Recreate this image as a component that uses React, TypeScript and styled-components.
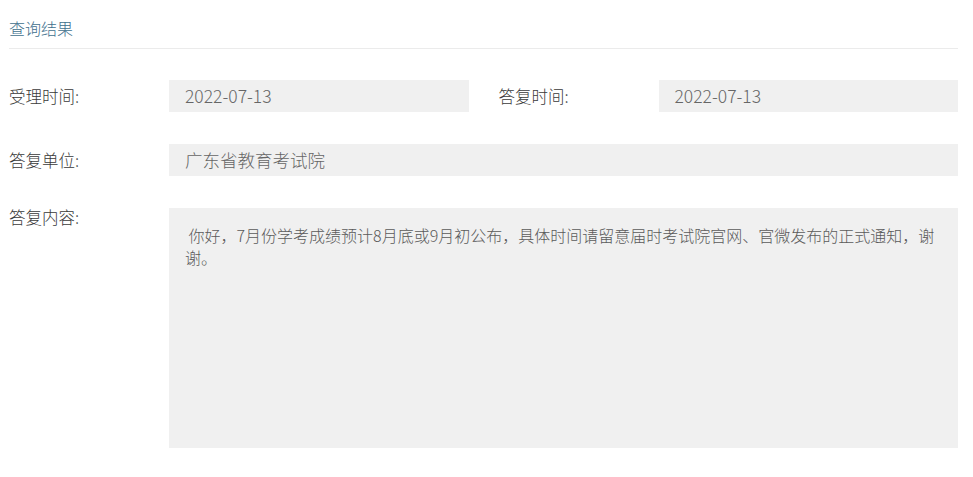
import styled, { createGlobalStyle } from "styled-components";

const GlobalStyle = createGlobalStyle`
  body {
    margin: 0;
    background: #ffffff;
    font-family: "Noto Sans CJK SC", "Liberation Sans", sans-serif;
    font-weight: 300;
  }
`;

interface FieldProps {
  label: string;
  value: string;
}

const Field = ({ label, value }: FieldProps) => (
  <FieldGroup>
    <Label>{label}</Label>
    <ValueBox>{value}</ValueBox>
  </FieldGroup>
);

const App = () => {
  return (
    <Page>
      <GlobalStyle />
      <Header>
        <Title>查询结果</Title>
      </Header>
      <Body>
        <Row>
          <Field label="受理时间:" value="2022-07-13" />
          <Field label="答复时间:" value="2022-07-13" />
        </Row>
        <Row>
          <Field label="答复单位:" value="广东省教育考试院" />
        </Row>
        <Row>
          <FieldGroup>
            <Label compact>答复内容:</Label>
            <ContentBox>
              {"\u00a0你好，7月份学考成绩预计8月底或9月初公布，具体时间请留意届时考试院官网、官微发布的正式通知，谢谢。"}
            </ContentBox>
          </FieldGroup>
        </Row>
      </Body>
    </Page>
  );
};

const Page = styled.div`
  padding: 0 15px 0 9px;
`;

const Header = styled.div`
  height: 49px;
  display: flex;
  align-items: center;
  padding-top: 8px;
  box-sizing: border-box;
  border-bottom: 1px solid #ebebeb;
`;

const Title = styled.div`
  font-size: 16px;
  color: #41708d;
  line-height: 20px;
`;

const Body = styled.div`
  padding-top: 31px;
  display: flex;
  flex-direction: column;
  gap: 32px;
`;

const Row = styled.div`
  display: flex;
  gap: 30px;
`;

const FieldGroup = styled.div`
  flex: 1;
  display: flex;
  align-items: flex-start;
  min-width: 0;
`;

const Label = styled.div<{ compact?: boolean }>`
  width: 160px;
  flex-shrink: 0;
  font-size: 16.5px;
  color: #3a3a3a;
  line-height: ${({ compact }) => (compact ? "18px" : "30px")};
  padding-top: ${({ compact }) => (compact ? "0" : "1px")};
`;

const ValueBox = styled.div`
  flex: 1;
  height: 32px;
  line-height: 32px;
  padding-left: 16px;
  background: #f0f0f0;
  color: #666666;
  font-size: 17.5px;
  white-space: nowrap;
  overflow: hidden;
`;

const ContentBox = styled.div`
  flex: 1;
  height: 240px;
  box-sizing: border-box;
  padding: 16px;
  background: #f0f0f0;
  color: #5a5a5a;
  font-size: 16px;
  line-height: 22px;
`;

export default App;
